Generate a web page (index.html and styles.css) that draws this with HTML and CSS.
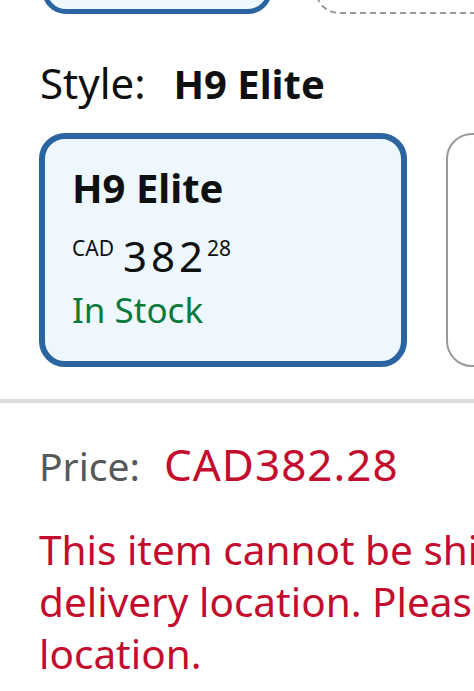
FILE: index.html
```html
<!DOCTYPE html>
<html lang="en">
<head>
  <meta charset="UTF-8" />
  <meta name="viewport" content="width=device-width, initial-scale=1.0" />
  <title>H9 Elite</title>
  <link rel="stylesheet" href="styles.css">
</head>
<body>
  <div class="page">
    <!-- previous option row, scrolled mostly out of view -->
    <div class="prev-row">
      <div class="prev-card selected"></div>
      <div class="prev-card dashed"></div>
    </div>

    <div class="variation-label">
      <span class="label">Style:</span>
      <span class="value">H9 Elite</span>
    </div>

    <div class="swatches">
      <div class="swatch selected">
        <h3>H9 Elite</h3>
        <p class="swatch-price"><sup>CAD</sup><span class="whole">382</span><sup>28</sup></p>
        <p class="stock">In Stock</p>
      </div>
      <div class="swatch"></div>
    </div>
  </div>

  <hr class="divider">

  <div class="page">
    <div class="price-row">
      <span class="label">Price:</span>
      <span class="amount">CAD382.28</span>
    </div>
    <p class="warning">This item cannot be shipped to your selected<br>delivery location. Please choose a different<br>location.</p>
  </div>
</body>
</html>
```

FILE: styles.css
```css
* { box-sizing: border-box; margin: 0; padding: 0; }
html, body { overflow: hidden; }
body { font-family: "Noto Sans", sans-serif; background: #fff; color: #0f1111; width: 474px; height: 691px; }
.page { padding-left: 39px; width: 900px; }

.prev-row { display: flex; gap: 46px; margin-top: -86px; height: 100px; }
.prev-card { flex-shrink: 0; height: 100px; border-radius: 24px; }
.prev-card.selected { width: 230px; margin-left: 3px; border: 5px solid #2a65a2; background: #eef8fd; }
.prev-card.dashed { width: 300px; margin-left: -3px; border: 2px dashed #9a9a9a; }

.variation-label { display: flex; align-items: baseline; gap: 28px; margin-top: 44px; line-height: 50px; font-size: 42px; }
.variation-label .label { color: #0f1111; margin-left: 1px; }
.variation-label .value { font-weight: 700; font-size: 40px; }

.swatches { display: flex; gap: 39px; margin-top: 24px; }
.swatch { flex-shrink: 0; width: 368px; height: 234px; border: 2px solid #999; border-radius: 26px; }
.swatch.selected { border: 6px solid #2a65a2; background: #edf7fd; padding: 25px 0 0 27px; }
.swatch h3 { font-size: 40px; font-weight: 700; line-height: 48px; }
.swatch-price { margin-top: 24px; line-height: 40px; font-size: 42px; }
.swatch-price sup { font-size: 21px; line-height: 20px; vertical-align: 16px; }
.swatch-price .whole { letter-spacing: 4px; margin-left: 9px; }
.stock { margin-top: 12px; font-size: 35px; line-height: 44px; color: #0b7a3b; }

.divider { border: none; height: 4px; background: #dcdcdc; margin-top: 32px; }

.price-row { display: flex; align-items: baseline; gap: 24px; margin-top: 35px; line-height: 52px; }
.price-row .label { font-size: 39px; color: #565959; }
.price-row .amount { font-size: 44px; color: #c40c2e; letter-spacing: 1px; }

.warning { margin-top: 32px; font-size: 40.5px; line-height: 52px; color: #c40c2e; white-space: nowrap; }
```
